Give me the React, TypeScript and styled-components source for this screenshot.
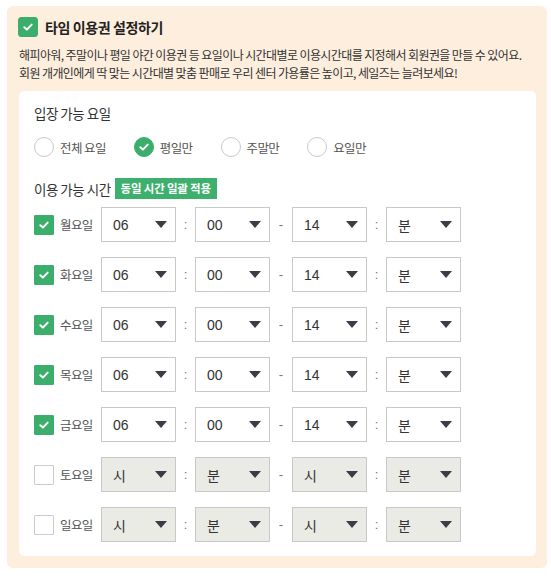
import React from "react";
import styled, { createGlobalStyle } from "styled-components";

const GlobalStyle = createGlobalStyle`
  body {
    margin: 0;
    background: #ffffff;
    font-family: "Noto Sans CJK KR", "Noto Sans", sans-serif;
    color: #333;
  }
`;

const Panel = styled.section`
  margin: 6px 4px 9px 7px;
  padding: 11px 11px 12px 12px;
  background: #fdeedd;
  border-radius: 6px;
`;

const TitleRow = styled.div`
  display: flex;
  align-items: center;
  gap: 7px;
  margin-left: -1px;
`;

const Title = styled.h2`
  margin: 0;
  font-size: 14px;
  font-weight: 700;
  color: #222;
  letter-spacing: -0.4px;
`;

const Desc = styled.p`
  margin: 9px 0 9px;
  font-size: 12px;
  line-height: 18px;
  color: #333;
  letter-spacing: -0.6px;
  white-space: nowrap;
`;

const Card = styled.div`
  background: #fff;
  border-radius: 5px;
  padding: 12px 16px 14px 15px;
`;

const Label = styled.div`
  font-size: 13.5px;
  line-height: 20px;
  color: #333;
  letter-spacing: -0.5px;
`;

const RadioGroup = styled.div`
  display: flex;
  align-items: center;
  gap: 28px;
  margin: 14px 0 0;
`;

const RadioItem = styled.label`
  display: flex;
  align-items: center;
  gap: 6px;
  font-size: 12.5px;
  letter-spacing: -0.6px;
  color: #555;
`;

const Circle = styled.span<{ $on?: boolean }>`
  width: 20px;
  height: 20px;
  border-radius: 50%;
  box-sizing: border-box;
  border: 1px solid ${(p) => (p.$on ? "#3aae6a" : "#c9c9c9")};
  background: ${(p) => (p.$on ? "#3aae6a" : "#fff")};
  display: flex;
  align-items: center;
  justify-content: center;
`;

const TimeHead = styled.div`
  display: flex;
  align-items: center;
  gap: 4px;
  margin-top: 21px;
`;

const Badge = styled.span`
  background: #3cb06c;
  color: #fff;
  font-size: 11.5px;
  font-weight: 700;
  height: 21px;
  line-height: 21px;
  padding: 0 6px;
  letter-spacing: -0.2px;
`;

const Rows = styled.div`
  display: flex;
  flex-direction: column;
  gap: 15px;
  margin-top: 8px;
`;

const Row = styled.div`
  display: flex;
  align-items: center;
`;

const Box = styled.span<{ $on?: boolean; $radius?: number }>`
  width: 20px;
  height: 20px;
  box-sizing: border-box;
  border-radius: ${(p) => p.$radius ?? 1}px;
  border: 1px solid ${(p) => (p.$on ? "#3aae6a" : "#cccccc")};
  background: ${(p) => (p.$on ? "#3aae6a" : "#fff")};
  display: flex;
  align-items: center;
  justify-content: center;
  flex-shrink: 0;
`;

const DayLabel = styled.span`
  width: 41px;
  margin-left: 6px;
  font-size: 12.5px;
  letter-spacing: -0.6px;
  color: #555;
`;

const Select = styled.div<{ $disabled?: boolean }>`
  width: 75px;
  height: 35px;
  box-sizing: border-box;
  border: 1px solid #c8c8c8;
  background: ${(p) => (p.$disabled ? "#ebebe6" : "#fff")};
  display: flex;
  align-items: center;
  justify-content: space-between;
  padding: 0 8px 0 11px;
  font-family: "Liberation Sans", "Noto Sans CJK KR", sans-serif;
  font-size: 14px;
  color: #333;
`;

const Caret = styled.span`
  width: 0;
  height: 0;
  border-left: 6px solid transparent;
  border-right: 6px solid transparent;
  border-top: 7px solid #3a3d45;
`;

const Sep = styled.span<{ $w: number }>`
  width: ${(p) => p.$w}px;
  text-align: center;
  font-family: "Liberation Sans", sans-serif;
  font-size: 13px;
  color: #777;
`;

const Check = ({ size = 12 }: { size?: number }) => (
  <svg width={size} height={size} viewBox="0 0 12 12">
    <path d="M2.3 6.2 L4.9 8.6 L9.7 3.6" fill="none" stroke="#fff" strokeWidth="2" strokeLinecap="round" strokeLinejoin="round" />
  </svg>
);

const days = [
  { name: "월요일", on: true },
  { name: "화요일", on: true },
  { name: "수요일", on: true },
  { name: "목요일", on: true },
  { name: "금요일", on: true },
  { name: "토요일", on: false },
  { name: "일요일", on: false },
];

const radios = [
  { name: "전체 요일", on: false },
  { name: "평일만", on: true },
  { name: "주말만", on: false },
  { name: "요일만", on: false },
];

export default function App() {
  return (
    <>
      <GlobalStyle />
      <Panel>
        <TitleRow>
          <Box $on $radius={3}>
            <Check />
          </Box>
          <Title>타임 이용권 설정하기</Title>
        </TitleRow>
        <Desc>
          해피아워, 주말이나 평일 야간 이용권 등 요일이나 시간대별로 이용시간대를 지정해서 회원권을 만들 수 있어요.
          <br />
          회원 개개인에게 딱 맞는 시간대별 맞춤 판매로 우리 센터 가용률은 높이고, 세일즈는 늘려보세요!
        </Desc>
        <Card>
          <Label>입장 가능 요일</Label>
          <RadioGroup>
            {radios.map((r) => (
              <RadioItem key={r.name}>
                <Circle $on={r.on}>{r.on && <Check />}</Circle>
                {r.name}
              </RadioItem>
            ))}
          </RadioGroup>
          <TimeHead>
            <Label>이용 가능 시간</Label>
            <Badge>동일 시간 일괄 적용</Badge>
          </TimeHead>
          <Rows>
            {days.map((d) => (
              <Row key={d.name}>
                <Box $on={d.on}>{d.on && <Check />}</Box>
                <DayLabel>{d.name}</DayLabel>
                <Select $disabled={!d.on}>
                  {d.on ? "06" : "시"}
                  <Caret />
                </Select>
                <Sep $w={19}>:</Sep>
                <Select $disabled={!d.on}>
                  {d.on ? "00" : "분"}
                  <Caret />
                </Select>
                <Sep $w={22}>-</Sep>
                <Select $disabled={!d.on}>
                  {d.on ? "14" : "시"}
                  <Caret />
                </Select>
                <Sep $w={19}>:</Sep>
                <Select $disabled={!d.on}>
                  분
                  <Caret />
                </Select>
              </Row>
            ))}
          </Rows>
        </Card>
      </Panel>
    </>
  );
}
